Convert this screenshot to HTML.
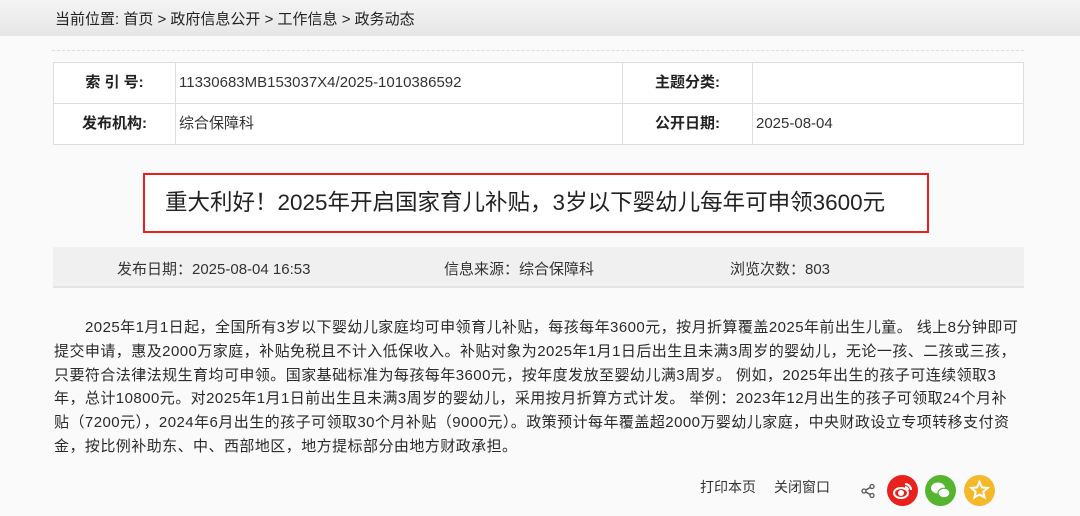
<!DOCTYPE html>
<html><head><meta charset="utf-8"><style>
body{margin:0;width:1080px;height:516px;background:#fafafa;font-family:"Liberation Sans","Noto Sans CJK SC",sans-serif;color:#333;position:relative;overflow:hidden}
.top{position:absolute;left:0;top:0;width:1080px;height:36px;background:linear-gradient(#f4f4f4,#e6e6e6);}
.top span{position:absolute;left:55px;top:8px;font-size:15px;color:#222}
.dots{position:absolute;left:52px;top:50px;width:972px;border-top:1px dashed #ddd}
table{position:absolute;left:53px;top:62px;width:971px;border-collapse:collapse;background:#fff;font-size:15px}
td{border:1px solid #ddd;height:40px;padding:0;line-height:40px}
td.k{font-weight:bold;text-align:center;color:#222}
td.v{padding-left:3px}
.title{position:absolute;left:143px;top:173px;width:782px;height:56px;border:2px solid #e8211c;background:#fff;font-size:22.5px;color:#222;line-height:56px;text-indent:20px;white-space:nowrap}
.meta{position:absolute;left:53px;top:247px;width:971px;height:39px;background:#f0f0f0;border-bottom:2px solid #e4e4e4;font-size:15px;color:#333}
.meta span{position:absolute;top:11px}
.body{position:absolute;left:54px;top:316px;width:1000px;font-size:15px;line-height:23.8px;color:#2a2a2a;white-space:nowrap;letter-spacing:0.45px}
.ft{position:absolute;top:477px;font-size:14px;color:#333}
.ic{position:absolute;top:475px;width:31px;height:31px;border-radius:50%}
</style></head><body>
<div class="top"><span>当前位置: 首页 &gt; 政府信息公开 &gt; 工作信息 &gt; 政务动态</span></div>
<div class="dots"></div>
<table>
<tr><td class="k" style="width:121px">索 引 号:</td><td class="v" style="width:443px">11330683MB153037X4/2025-1010386592</td><td class="k" style="width:129px">主题分类:</td><td class="v"></td></tr>
<tr><td class="k">发布机构:</td><td class="v">综合保障科</td><td class="k">公开日期:</td><td class="v">2025-08-04</td></tr>
</table>
<div class="title">重大利好！2025年开启国家育儿补贴，3岁以下婴幼儿每年可申领3600元</div>
<div class="meta"><span style="left:64px">发布日期：2025-08-04 16:53</span><span style="left:391px">信息来源：综合保障科</span><span style="left:677px">浏览次数：803</span></div>
<div class="body"><span style="display:inline-block;width:31px"></span>2025年1月1日起，全国所有3岁以下婴幼儿家庭均可申领育儿补贴，每孩每年3600元，按月折算覆盖2025年前出生儿童。 线上8分钟即可<br>提交申请，惠及2000万家庭，补贴免税且不计入低保收入。补贴对象为2025年1月1日后出生且未满3周岁的婴幼儿，无论一孩、二孩或三孩，<br>只要符合法律法规生育均可申领。国家基础标准为每孩每年3600元，按年度发放至婴幼儿满3周岁。 例如，2025年出生的孩子可连续领取3<br>年，总计10800元。对2025年1月1日前出生且未满3周岁的婴幼儿，采用按月折算方式计发。 举例：2023年12月出生的孩子可领取24个月补<br>贴（7200元），2024年6月出生的孩子可领取30个月补贴（9000元）。政策预计每年覆盖超2000万婴幼儿家庭，中央财政设立专项转移支付资<br>金，按比例补助东、中、西部地区，地方提标部分由地方财政承担。</div>
<div class="ft" style="left:700px">打印本页</div>
<div class="ft" style="left:774px">关闭窗口</div>
<svg style="position:absolute;left:860px;top:483px" width="16" height="16" viewBox="0 0 16 16" fill="none" stroke="#555" stroke-width="1.3"><circle cx="12" cy="3.5" r="2"/><circle cx="4" cy="8" r="2"/><circle cx="12" cy="12.5" r="2"/><path d="M5.8 7 10.2 4.5M5.8 9 10.2 11.5"/></svg>
<div class="ic" style="left:887px;background:#e8211c"><svg width="31" height="31" viewBox="0 0 31 31" fill="none" stroke="#fff" stroke-width="2"><ellipse cx="14" cy="18" rx="7" ry="5"/><circle cx="14" cy="18" r="2" fill="#fff"/><path d="M18 9a6 6 0 0 1 6 6M18 12a3 3 0 0 1 3 3"/></svg></div>
<div class="ic" style="left:925px;background:#55b52f"><svg width="31" height="31" viewBox="0 0 31 31" fill="#fff"><ellipse cx="13" cy="13" rx="7" ry="5.5"/><ellipse cx="19" cy="18" rx="6" ry="4.8" stroke="#55b52f" stroke-width="1.2"/></svg></div>
<div class="ic" style="left:964px;background:#f3b92b"><svg width="31" height="31" viewBox="0 0 31 31" fill="none" stroke="#fff" stroke-width="2"><path d="M15.5 7l2.4 5.4 5.8.5-4.4 3.9 1.3 5.7-5.1-3-5.1 3 1.3-5.7-4.4-3.9 5.8-.5z"/></svg></div>
</body></html>
